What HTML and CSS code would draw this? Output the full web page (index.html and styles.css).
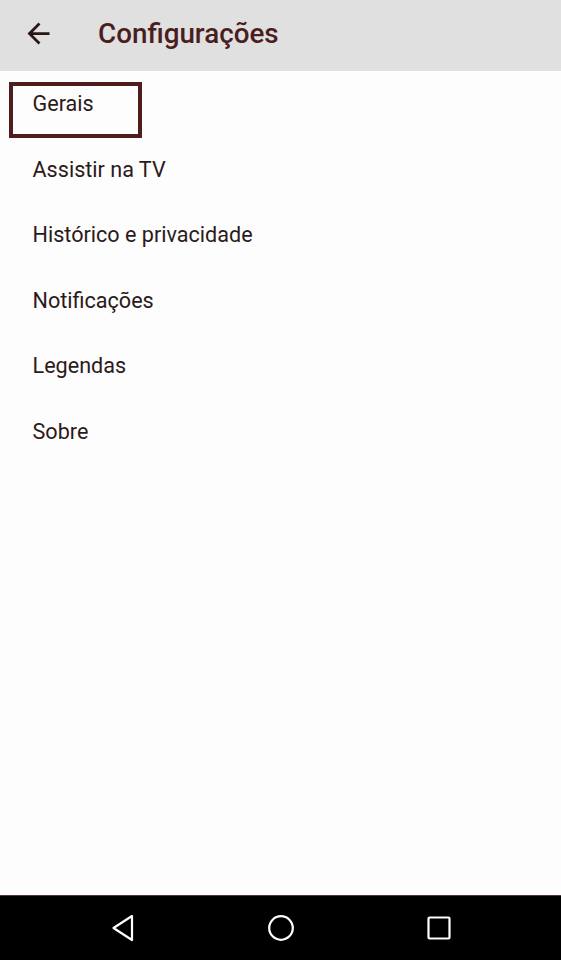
FILE: index.html
```html
<!DOCTYPE html>
<html lang="pt-BR">
<head>
<meta charset="utf-8">
<title>Configurações</title>
<link rel="stylesheet" href="styles.css">
</head>
<body>
<div class="screen">
  <header class="appbar">
    <button class="back" aria-label="Voltar">
      <svg viewBox="0 0 24 24" width="33" height="33"><path d="M20 11H7.83l5.59-5.59L12 4l-8 8 8 8 1.41-1.41L7.83 13H20v-2z" fill="#2a1616"/></svg>
    </button>
    <h1 class="title">Configurações</h1>
  </header>
  <ul class="menu">
    <li class="item selected"><span>Gerais</span></li>
    <li class="item"><span>Assistir na TV</span></li>
    <li class="item"><span>Histórico e privacidade</span></li>
    <li class="item"><span>Notificações</span></li>
    <li class="item"><span>Legendas</span></li>
    <li class="item"><span>Sobre</span></li>
  </ul>
  <nav class="navbar">
    <svg class="nav-icon" viewBox="0 0 24 28" width="24" height="28"><path d="M21 2 L2.5 14 L21 26 Z" fill="none" stroke="#fff" stroke-width="2.2" stroke-linejoin="round"/></svg>
    <svg class="nav-icon" viewBox="0 0 28 28" width="28" height="28"><circle cx="14" cy="14" r="11.8" fill="none" stroke="#fff" stroke-width="2.2"/></svg>
    <svg class="nav-icon" viewBox="0 0 24 24" width="24" height="24"><rect x="1.5" y="1.5" width="21" height="21" rx="1" fill="none" stroke="#fff" stroke-width="2.2"/></svg>
  </nav>
</div>
</body>
</html>
```

FILE: styles.css
```css
*, *::before, *::after { box-sizing: border-box; }
html, body { margin: 0; padding: 0; }
body {
  width: 561px;
  height: 960px;
  background: #fdfdfd;
  font-family: Roboto, "Noto Sans", "Liberation Sans", sans-serif;
  overflow: hidden;
}
.screen {
  display: flex;
  flex-direction: column;
  height: 960px;
}
.appbar {
  height: 71px;
  background: #e0e0e0;
  display: flex;
  align-items: center;
  flex-shrink: 0;
}
.back {
  width: 33px;
  height: 33px;
  margin-left: 22px;
  margin-top: -4px;
  padding: 0;
  border: 0;
  background: none;
  display: flex;
}
.title {
  margin: -4px 0 0 43px;
  font-size: 27.8px;
  font-weight: 500;
  color: #4a1e1e;
}
.menu {
  list-style: none;
  margin: 0;
  padding: 0;
  flex: 1;
}
.item {
  height: 65.5px;
  display: flex;
  align-items: center;
  padding-left: 32.5px;
  font-size: 21.6px;
  color: #2b1a1a;
  position: relative;
}
.selected::before {
  content: "";
  position: absolute;
  left: 9px;
  top: 11px;
  width: 133px;
  height: 56px;
  border: 4.5px solid #4f1d1e;
}
.navbar {
  height: 65px;
  background: #000;
  border-top: 1px solid #5a3030;
  display: flex;
  align-items: center;
  flex-shrink: 0;
  padding-bottom: 1px;
}
.navbar .nav-icon:nth-child(1) { margin-left: 111px; }
.navbar .nav-icon:nth-child(2) { margin-left: 131.5px; }
.navbar .nav-icon:nth-child(3) { margin-left: 132.5px; }
```
